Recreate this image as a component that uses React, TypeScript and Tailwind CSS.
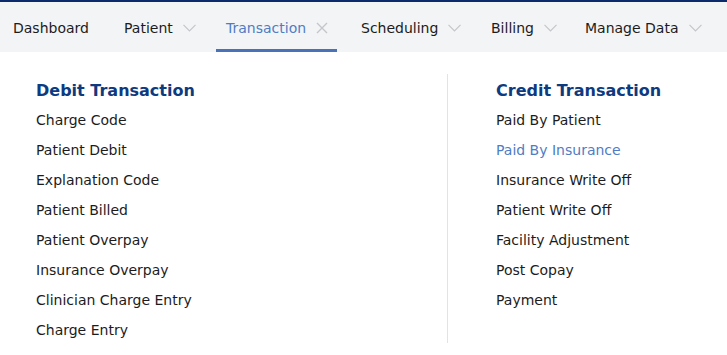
import React from 'react';

const tabs = [
  { label: 'Dashboard', icon: null, w: 'w-[97px]' },
  { label: 'Patient', icon: 'chevron', w: 'w-[88px]' },
  { label: 'Transaction', icon: 'close', active: true, w: 'w-[121px]' },
  { label: 'Scheduling', icon: 'chevron', w: 'w-[116px]' },
  { label: 'Billing', icon: 'chevron', w: 'w-[80px]' },
  { label: 'Manage Data', icon: 'chevron', w: 'w-auto' },
];

const debitItems = [
  'Charge Code',
  'Patient Debit',
  'Explanation Code',
  'Patient Billed',
  'Patient Overpay',
  'Insurance Overpay',
  'Clinician Charge Entry',
  'Charge Entry',
];

const creditItems = [
  'Paid By Patient',
  'Paid By Insurance',
  'Insurance Write Off',
  'Patient Write Off',
  'Facility Adjustment',
  'Post Copay',
  'Payment',
];

function Chevron() {
  return (
    <svg className="shrink-0" width="13" height="8" viewBox="0 0 13 8" fill="none">
      <path d="M0.5 0.8 L6.5 6.8 L12.5 0.8" stroke="#c4c6ca" strokeWidth="1.2" />
    </svg>
  );
}

function Close() {
  return (
    <svg className="shrink-0" width="12" height="12" viewBox="0 0 12 12" fill="none">
      <path d="M1 1 L11 11 M11 1 L1 11" stroke="#c4c6ca" strokeWidth="1.4" />
    </svg>
  );
}

function App() {
  return (
    <div className="w-[727px] h-[355px] bg-white font-['DejaVu_Sans',Verdana,sans-serif] text-[14px] text-[#1c1c1c] overflow-hidden">
      <div className="h-[2px] bg-[#0b2b6c]" />
      <nav className="flex h-[50px] bg-[#f3f4f6] pl-[3px] gap-[14px]">
        {tabs.map((t) => (
          <div
            key={t.label}
            className={
              t.active
                ? `${t.w} shrink-0 flex items-center gap-[10px] px-[10px] pt-[5px] border-b-[3px] border-[#4a72b8] text-[#4f7cc4]`
                : `${t.w} shrink-0 flex items-center gap-[10px] px-[10px] pt-[5px] border-b-[3px] border-transparent`
            }
          >
            <span className="whitespace-nowrap">{t.label}</span>
            {t.icon === 'chevron' && <Chevron />}
            {t.icon === 'close' && <Close />}
          </div>
        ))}
      </nav>
      <div className="flex items-start pt-[22px]">
        <div className="w-[447px] pl-[36px] pt-[2px]">
          <h3 className="text-[16px] font-bold text-[#0e3a80] leading-[29px] h-[29px]">Debit Transaction</h3>
          <ul>
            {debitItems.map((i) => (
              <li key={i} className="leading-[30px] h-[30px]">{i}</li>
            ))}
          </ul>
        </div>
        <div className="w-px h-[269px] bg-[#e3e3e3]" />
        <div className="pl-[48px] pt-[2px] flex-1">
          <h3 className="text-[16px] font-bold text-[#0e3a80] leading-[29px] h-[29px]">Credit Transaction</h3>
          <ul>
            {creditItems.map((i) => (
              <li
                key={i}
                className={i === 'Paid By Insurance' ? 'leading-[30px] h-[30px] text-[#4f7cc4]' : 'leading-[30px] h-[30px]'}
              >
                {i}
              </li>
            ))}
          </ul>
        </div>
      </div>
    </div>
  );
}

export default App;
